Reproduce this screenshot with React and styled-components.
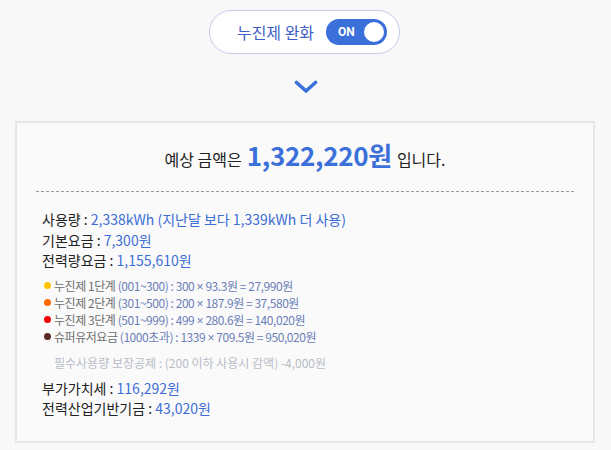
import React from 'react';
import styled, { createGlobalStyle } from 'styled-components';

const GlobalStyle = createGlobalStyle`
  html, body {
    margin: 0;
    padding: 0;
    background: #f8f8f9;
  }
  body {
    font-family: "Noto Sans CJK KR", "Noto Sans", sans-serif;
    color: #222;
  }
`;

const Page = styled.div`
  width: 611px;
  height: 450px;
  display: flex;
  flex-direction: column;
  align-items: center;
  box-sizing: border-box;
  padding-top: 10px;
`;

const Pill = styled.div`
  display: flex;
  align-items: center;
  gap: 12px;
  height: 44px;
  box-sizing: border-box;
  padding: 0 12px 0 27px;
  border: 1px solid #c3cde6;
  border-radius: 22px;
  background: #fff;
  color: #3f5fc6;
  font-size: 16px;
  margin-left: -2px;
`;

const Toggle = styled.div`
  display: flex;
  align-items: center;
  justify-content: space-between;
  width: 61px;
  height: 26px;
  box-sizing: border-box;
  padding: 0 3px 0 12px;
  border-radius: 13px;
  background: ${p => (p.on ? '#3b6fd9' : '#c9ced8')};
  color: #fff;
  font-size: 12px;
  font-weight: 700;
  font-family: "Roboto", "Noto Sans", sans-serif;

  &::after {
    content: '';
    width: 20px;
    height: 20px;
    border-radius: 50%;
    background: #fff;
  }
`;

const Chevron = styled.div`
  margin-top: 26px;
  height: 14px;
  display: flex;
  justify-content: center;
`;

const Box = styled.div`
  margin-top: 27px;
  align-self: stretch;
  margin-left: 15px;
  margin-right: 16px;
  height: 322px;
  box-sizing: border-box;
  border: 2px solid #e6e6e6;
  background: #fafafa;
  padding: 0 19px;
`;

const Heading = styled.div`
  display: flex;
  align-items: baseline;
  justify-content: center;
  gap: 5px;
  padding: 13px 0 18px;
  font-size: 16px;
  color: #222;
  border-bottom: 1px dashed #9a9a9a;
`;

const Amount = styled.span`
  font-size: 26px;
  font-weight: 700;
  color: #3b6fd9;
  letter-spacing: -0.3px;
`;

const List = styled.div`
  padding: 17px 0 0 6px;
`;

const Row = styled.div`
  font-size: 14px;
  line-height: 20.5px;
  color: #222;
`;

const Value = styled.span`
  color: #3d6ed6;
`;

const SubList = styled.div`
  margin: 6px 0 0 2px;
`;

const SubRow = styled.div`
  display: flex;
  align-items: center;
  height: 17px;
  font-size: 12px;
  line-height: 17px;
  color: #6e6e6e;
  letter-spacing: -0.45px;
  white-space: pre;
`;

const Dot = styled.span`
  width: 7px;
  height: 7px;
  border-radius: 50%;
  background: ${p => p.color};
  margin-right: 3px;
`;

const SubValue = styled.span`
  color: #6b80b8;
`;

const Times = styled.span`
  font-family: "Liberation Sans", sans-serif;
  line-height: 1;
`;

const Deduction = styled.div`
  margin: 9px 0 6px 12px;
  font-size: 12px;
  line-height: 18px;
  color: #b8bcc6;
`;

const steps = [
  { color: '#ffc400', label: '누진제 1단계', range: '(001~300) : 300', rest: '93.3원 = 27,990원' },
  { color: '#ff6a00', label: '누진제 2단계', range: '(301~500) : 200', rest: '187.9원 = 37,580원' },
  { color: '#f00000', label: '누진제 3단계', range: '(501~999) : 499', rest: '280.6원 = 140,020원' },
  { color: '#5a2a22', label: '슈퍼유저요금', range: '(1000초과) : 1339', rest: '709.5원 = 950,020원' },
];

const App = () => {
  return (
    <Page>
      <GlobalStyle />
      <Pill>
        <span>누진제 완화</span>
        <Toggle on>ON</Toggle>
      </Pill>
      <Chevron>
        <svg width="24" height="14" viewBox="0 0 24 14">
          <path d="M2.5 2.5 L12 11 L21.5 2.5" fill="none" stroke="#3b6fd9" strokeWidth="3.6" strokeLinecap="round" strokeLinejoin="round" />
        </svg>
      </Chevron>
      <Box>
        <Heading>
          <span>예상 금액은</span>
          <Amount>1,322,220원</Amount>
          <span>입니다.</span>
        </Heading>
        <List>
          <Row>사용량 : <Value>2,338kWh (지난달 보다 1,339kWh 더 사용)</Value></Row>
          <Row>기본요금 : <Value>7,300원</Value></Row>
          <Row>전력량요금 : <Value>1,155,610원</Value></Row>
          <SubList>
            {steps.map(s => (
              <SubRow key={s.label}>
                <Dot color={s.color} />
                {s.label} <SubValue>{s.range} <Times>×</Times> {s.rest}</SubValue>
              </SubRow>
            ))}
          </SubList>
          <Deduction>필수사용량 보장공제 : (200 이하 사용시 감액) -4,000원</Deduction>
          <Row>부가가치세 : <Value>116,292원</Value></Row>
          <Row>전력산업기반기금 : <Value>43,020원</Value></Row>
        </List>
      </Box>
    </Page>
  );
};

export default App;
